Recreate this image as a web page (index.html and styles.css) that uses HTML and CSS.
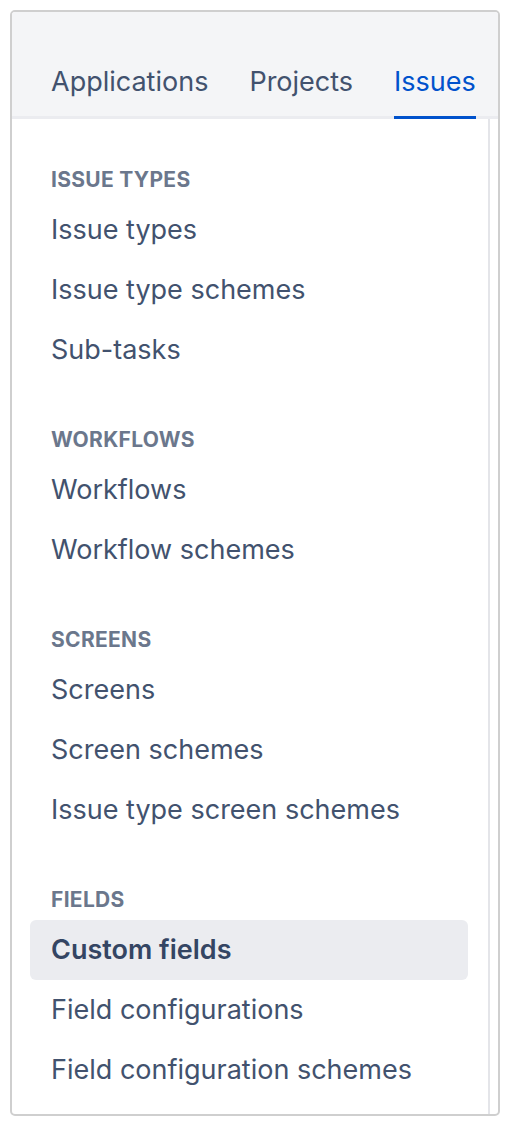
FILE: index.html
```html
<!DOCTYPE html>
<html lang="en">
<head>
    <meta charset="UTF-8">
    <meta name="viewport" content="width=device-width, initial-scale=1.0">
    <title>Issues administration</title>
    <link rel="stylesheet" href="styles.css">
</head>
<body>

    <div class="panel">
        <div class="tabs">
            <a class="tab">Applications</a>
            <a class="tab">Projects</a>
            <a class="tab active">Issues</a>
        </div>

        <div class="panel-body">
            <div class="menu">
                <div class="group">
                    <div class="group-title">Issue types</div>
                    <a class="item">Issue types</a>
                    <a class="item">Issue type schemes</a>
                    <a class="item">Sub-tasks</a>
                </div>
                <div class="group">
                    <div class="group-title">Workflows</div>
                    <a class="item">Workflows</a>
                    <a class="item">Workflow schemes</a>
                </div>
                <div class="group">
                    <div class="group-title">Screens</div>
                    <a class="item">Screens</a>
                    <a class="item">Screen schemes</a>
                    <a class="item">Issue type screen schemes</a>
                </div>
                <div class="group">
                    <div class="group-title">Fields</div>
                    <a class="item selected">Custom fields</a>
                    <a class="item">Field configurations</a>
                    <a class="item">Field configuration schemes</a>
                </div>
            </div>
        </div>
    </div>

</body>
</html>
```

FILE: styles.css
```css
body {
    margin: 0;
    font-family: Inter, Roboto, "Noto Sans", sans-serif;
    background-color: white;
}
.panel {
    margin: 10px;
    width: 486px;
    height: 1102px;
    border: 2px solid #cfcfcf;
    border-radius: 5px;
    overflow: hidden;
    display: flex;
    flex-direction: column;
}
.tabs {
    height: 105px;
    background-color: #f4f5f7;
    border-bottom: 3px solid #ebecf0;
    display: flex;
    align-items: flex-end;
    gap: 41px;
    padding-left: 39px;
}
.tab {
    font-size: 27px;
    line-height: 40px;
    padding-bottom: 14px;
    color: #42526e;
    border-bottom: 3px solid transparent;
    margin-bottom: -3px;
}
.tab.active {
    color: #0052cc;
    border-bottom-color: #0052cc;
}
.panel-body {
    flex: 1;
    display: flex;
}
.menu {
    width: 438px;
    padding: 41px 20px 14px 18px;
    border-right: 2px solid #e4e5e9;
}
.group + .group {
    margin-top: 40px;
}
.group-title {
    height: 40px;
    line-height: 40px;
    padding-left: 21px;
    font-size: 21px;
    font-weight: bold;
    letter-spacing: 0.3px;
    text-transform: uppercase;
    color: #6b778c;
}
.item {
    display: block;
    height: 60px;
    line-height: 60px;
    padding-left: 21px;
    font-size: 27px;
    color: #42526e;
    border-radius: 6px;
}
.item.selected {
    background-color: #ebecf0;
    font-weight: 600;
    color: #344563;
}
```
